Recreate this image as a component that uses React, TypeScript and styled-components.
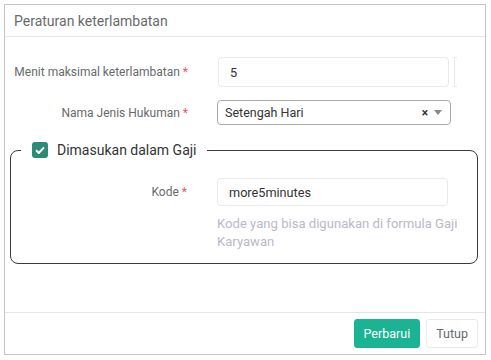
import React from "react";
import styled, { createGlobalStyle } from "styled-components";

const GlobalStyle = createGlobalStyle`
  html, body {
    margin: 0;
    padding: 0;
    background: #ffffff;
    font-family: Roboto, "Open Sans", Arial, sans-serif;
  }
`;

const Panel = styled("div")`
  box-sizing: border-box;
  width: 482px;
  height: 351px;
  margin: 4px 0 0 4px;
  border: 1px solid #c6c6c6;
  display: flex;
  flex-direction: column;
  background: #fff;
`;

const Header = styled("div")`
  height: 32px;
  display: flex;
  align-items: center;
  padding: 1px 9px 0;
  box-sizing: border-box;
  border-bottom: 1px solid #e5e5e5;
  font-size: 14px;
  color: #676a6c;
`;

const Body = styled("div")`
  flex: 1;
  padding-top: 20px;
`;

const Row = styled("div")<{ $label: number; $mt?: number }>`
  display: grid;
  grid-template-columns: ${(p) => p.$label}px 1fr;
  column-gap: 30px;
  align-items: center;
  margin-top: ${(p) => p.$mt || 0}px;
`;

const Label = styled("label")`
  text-align: right;
  font-size: 12px;
  color: #676a6c;
  white-space: nowrap;
`;

const Req = styled("span")`
  color: #ed5565;
  margin-left: 3px;
`;

const InputWrap = styled("div")`
  display: flex;
  align-items: center;
`;

const Input = styled("div")<{ $h?: number }>`
  box-sizing: border-box;
  width: 231px;
  height: ${(p) => p.$h || 30}px;
  border: 1px solid #e8e9ea;
  border-radius: 4px;
  padding: 0 11px;
  display: flex;
  align-items: center;
  font-size: 12.7px;
  color: #333;
`;

const Addon = styled("span")`
  box-sizing: border-box;
  width: 3px;
  height: 30px;
  margin-left: 5px;
  border: 1px solid #e8e8e8;
  border-right: none;
`;

const Select = styled("div")`
  box-sizing: border-box;
  width: 234px;
  height: 25px;
  margin-left: -1px;
  border: 1px solid #aaa;
  border-radius: 4px;
  padding: 0 7px;
  display: flex;
  align-items: center;
  font-size: 12.5px;
  color: #333;
`;

const SelectText = styled("span")`
  flex: 1;
`;

const Clear = styled("span")`
  font-size: 12px;
  font-weight: bold;
  color: #333;
  margin-right: 6px;
`;

const Arrow = styled("span")`
  width: 0;
  height: 0;
  border-left: 4px solid transparent;
  border-right: 4px solid transparent;
  border-top: 5px solid #888;
  margin-right: 1px;
`;

const Fieldset = styled("fieldset")`
  box-sizing: border-box;
  margin: 15px 7px 0 5px;
  padding: 0 10px 12px;
  border: 1.5px solid #3a3a3a;
  border-radius: 8px;
  min-width: 0;
`;

const Legend = styled("legend")`
  display: flex;
  align-items: center;
  gap: 9px;
  padding: 0 10px 0 11px;
  line-height: 20px;
  font-size: 14px;
  color: #333;
`;

const Check = styled("span")`
  width: 16px;
  height: 16px;
  border-radius: 3px;
  background: #2d8a77;
  display: flex;
  align-items: center;
  justify-content: center;
`;

const Help = styled("div")`
  width: 242px;
  white-space: nowrap;
  margin-top: 9px;
  font-size: 13.1px;
  line-height: 18px;
  color: #b9b9c8;
`;

const Footer = styled("div")`
  height: 40px;
  border-top: 1px solid #e5e5e5;
  display: flex;
  align-items: center;
  justify-content: flex-end;
  gap: 6px;
  padding: 0 7px 1px 0;
`;

const Button = styled("button")<{ $primary?: boolean }>`
  box-sizing: border-box;
  height: 29px;
  padding: 0 9px;
  border-radius: 3px;
  font-family: Roboto, Arial, sans-serif;
  font-size: 12.5px;
  border: 1px solid ${(p) => (p.$primary ? "#1ab394" : "#e7eaec")};
  background: ${(p) => (p.$primary ? "#1ab394" : "#fff")};
  color: ${(p) => (p.$primary ? "#fff" : "#676a6c")};
`;

const App = () => {
  return (
    <>
      <GlobalStyle />
      <Panel>
        <Header>Peraturan keterlambatan</Header>
        <Body>
          <Row $label={183}>
            <Label>
              Menit maksimal keterlambatan<Req>*</Req>
            </Label>
            <InputWrap>
              <Input>5</Input>
              <Addon />
            </InputWrap>
          </Row>
          <Row $label={183} $mt={13}>
            <Label>
              Nama Jenis Hukuman<Req>*</Req>
            </Label>
            <Select>
              <SelectText>Setengah Hari</SelectText>
              <Clear>×</Clear>
              <Arrow />
            </Select>
          </Row>
          <Fieldset>
            <Legend>
              <Check>
                <svg width="10" height="8" viewBox="0 0 10 8">
                  <path d="M1 4.2 L3.8 7 L9 1.4" stroke="#fff" strokeWidth="2" fill="none" />
                </svg>
              </Check>
              Dimasukan dalam Gaji
            </Legend>
            <Row $label={166} $mt={18}>
              <Label>
                Kode<Req>*</Req>
              </Label>
              <Input $h={28}>more5minutes</Input>
            </Row>
            <Row $label={166}>
              <span />
              <Help>
                Kode yang bisa digunakan di formula Gaji
                <br />
                Karyawan
              </Help>
            </Row>
          </Fieldset>
        </Body>
        <Footer>
          <Button $primary>Perbarui</Button>
          <Button>Tutup</Button>
        </Footer>
      </Panel>
    </>
  );
};

export default App;
